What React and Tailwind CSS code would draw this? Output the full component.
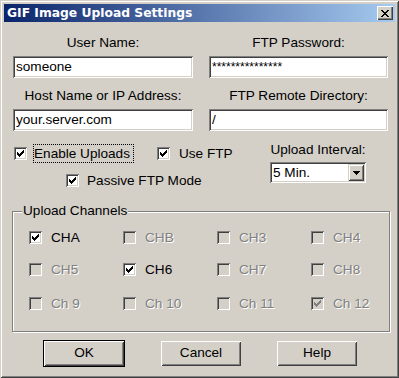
const CHECK = ['......X', '.....XX', 'X...XXX', 'XX.XXX.', 'XXXXX..', '.XXX...', '..X....'];
const CLOSE = ['XX....XX', '.XX..XX.', '..XXXX..', '...XX...', '..XXXX..', '.XX..XX.', 'XX....XX'];
const ARROW = ['XXXXXXX', '.XXXXX.', '..XXX..', '...X...'];

const Pixels = ({ rows, color = '#000' }) => (
  <svg width={rows[0].length} height={rows.length} shapeRendering="crispEdges" className="block">
    {rows.flatMap((row, y) =>
      row.split('').map((c, x) =>
        c === 'X' ? <rect key={`${x}-${y}`} x={x} y={y} width="1" height="1" fill={color} /> : null
      )
    )}
  </svg>
);

const Check = ({ checked, disabled }) => (
  <span
    className={`flex h-[13px] w-[13px] shrink-0 items-center justify-center shadow-[inset_1px_1px_0_#808080,inset_-1px_-1px_0_#fff,inset_2px_2px_0_#404040,inset_-2px_-2px_0_#d4d0c8] ${
      disabled ? 'bg-[#d4d0c8]' : 'bg-white'
    }`}
  >
    {checked && <Pixels rows={CHECK} color={disabled ? '#808080' : '#000'} />}
  </span>
);

const Field = ({ children, className = '' }) => (
  <div
    className={`flex h-[22px] items-center bg-white pl-[3px] shadow-[inset_1px_1px_0_#808080,inset_-1px_-1px_0_#fff,inset_2px_2px_0_#404040,inset_-2px_-2px_0_#d4d0c8] ${className}`}
  >
    {children}
  </div>
);

const Label = ({ children, className = '' }) => (
  <div className={`text-center leading-[16px] ${className}`}>{children}</div>
);

const Button = ({ children }) => (
  <div className="flex h-[25px] w-[80px] items-center justify-center bg-[#d4d0c8] shadow-[inset_1px_1px_0_#fff,inset_-1px_-1px_0_#404040,inset_2px_2px_0_#d4d0c8,inset_-2px_-2px_0_#808080]">
    {children}
  </div>
);

const channels = [
  { name: 'CHA', checked: true },
  { name: 'CHB', disabled: true },
  { name: 'CH3', disabled: true },
  { name: 'CH4', disabled: true },
  { name: 'CH5', disabled: true },
  { name: 'CH6', checked: true },
  { name: 'CH7', disabled: true },
  { name: 'CH8', disabled: true },
  { name: 'Ch 9', disabled: true },
  { name: 'Ch 10', disabled: true },
  { name: 'Ch 11', disabled: true },
  { name: 'Ch 12', disabled: true, checked: true },
];

const rowMargins = ['mt-0', 'mt-[15px]', 'mt-[17px]'];

export default function App() {
  const rows = [channels.slice(0, 4), channels.slice(4, 8), channels.slice(8, 12)];
  return (
    <div className="flex h-[378px] w-[399px] flex-col bg-[#d4d0c8] p-[4px] font-['Liberation_Sans',Arial,sans-serif] text-[13.6px] text-black shadow-[inset_1px_1px_0_#d4d0c8,inset_-1px_-1px_0_#404040,inset_2px_2px_0_#fff,inset_-2px_-2px_0_#808080]">
      {/* title bar */}
      <div className="flex h-[18px] shrink-0 items-center justify-between bg-[linear-gradient(to_right,#0a246a,#a6caf0)] pl-[3px] pr-[2px]">
        <span className="font-['DejaVu_Sans',sans-serif] text-[12.3px] font-bold leading-none text-white">
          GIF Image Upload Settings
        </span>
        <div className="flex h-[14px] w-[16px] items-center justify-center bg-[#d4d0c8] shadow-[inset_1px_1px_0_#fff,inset_-1px_-1px_0_#404040,inset_-2px_-2px_0_#808080]">
          <Pixels rows={CLOSE} />
        </div>
      </div>

      {/* text fields */}
      <div className="ml-[9px] mt-[13px] grid grid-cols-[180px_179px] gap-x-[16px]">
        <Label>User Name:</Label>
        <Label>FTP Password:</Label>
        <Field className="mt-[5px]">someone</Field>
        <Field className="mt-[5px] pl-[2px] text-[12px]">***************</Field>
        <Label className="mt-[10px]">Host Name or IP Address:</Label>
        <Label className="mt-[10px]">FTP Remote Directory:</Label>
        <Field className="mt-[5px]">your.server.com</Field>
        <Field className="mt-[5px]">/</Field>
      </div>

      {/* options */}
      <div className="mt-[11px] flex">
        <div className="w-[266px]">
          <div className="mt-[2px] flex h-[19px] items-center">
            <div className="ml-[10px]">
              <Check checked />
            </div>
            <span className="ml-[6px] h-[19px] w-[101px] border border-dotted border-black leading-[17px]">
              Enable Uploads
            </span>
            <div className="ml-[23px]">
              <Check checked />
            </div>
            <span className="ml-[9px] leading-[16px]">Use FTP</span>
          </div>
          <div className="mt-[10px] flex h-[15px] items-center">
            <div className="ml-[62px]">
              <Check checked />
            </div>
            <span className="ml-[8px] leading-[16px]">Passive FTP Mode</span>
          </div>
        </div>
        <div className="w-[96px]">
          <Label>Upload Interval:</Label>
          <div className="mt-[4px] flex h-[21px] items-center justify-between bg-white pl-[3px] pr-[2px] shadow-[inset_1px_1px_0_#808080,inset_-1px_-1px_0_#fff,inset_2px_2px_0_#404040,inset_-2px_-2px_0_#d4d0c8]">
            <span className="leading-[16px]">5 Min.</span>
            <div className="flex h-[17px] w-[16px] items-center justify-center bg-[#d4d0c8] shadow-[inset_1px_1px_0_#d4d0c8,inset_-1px_-1px_0_#404040,inset_2px_2px_0_#fff,inset_-2px_-2px_0_#808080]">
              <Pixels rows={ARROW} />
            </div>
          </div>
        </div>
      </div>

      {/* upload channels */}
      <div className="relative ml-[8px] mt-[23px] h-[121px] w-[378px] border border-[#808080] pl-[16px] pt-[17px] shadow-[inset_1px_1px_0_#fff,1px_1px_0_#fff]">
        <span className="absolute left-[9px] top-[-9px] bg-[#d4d0c8] px-[1px] leading-[16px]">Upload Channels</span>
        {rows.map((row, i) => (
          <div key={i} className={`grid grid-cols-[94px_94px_94px_94px] ${rowMargins[i]}`}>
            {row.map((ch) => (
              <div key={ch.name} className="flex h-[17px] items-center">
                <Check checked={ch.checked} disabled={ch.disabled} />
                <span
                  className={`ml-[9px] leading-[16px] ${
                    ch.disabled ? 'text-[#808080] [text-shadow:1px_1px_0_#fff]' : 'text-black'
                  }`}
                >
                  {ch.name}
                </span>
              </div>
            ))}
          </div>
        ))}
      </div>

      {/* buttons */}
      <div className="ml-[39px] mt-[8px] flex h-[27px] items-center">
        <div className="border border-black">
          <Button>OK</Button>
        </div>
        <div className="ml-[36px]">
          <Button>Cancel</Button>
        </div>
        <div className="ml-[36px]">
          <Button>Help</Button>
        </div>
      </div>
    </div>
  );
}
